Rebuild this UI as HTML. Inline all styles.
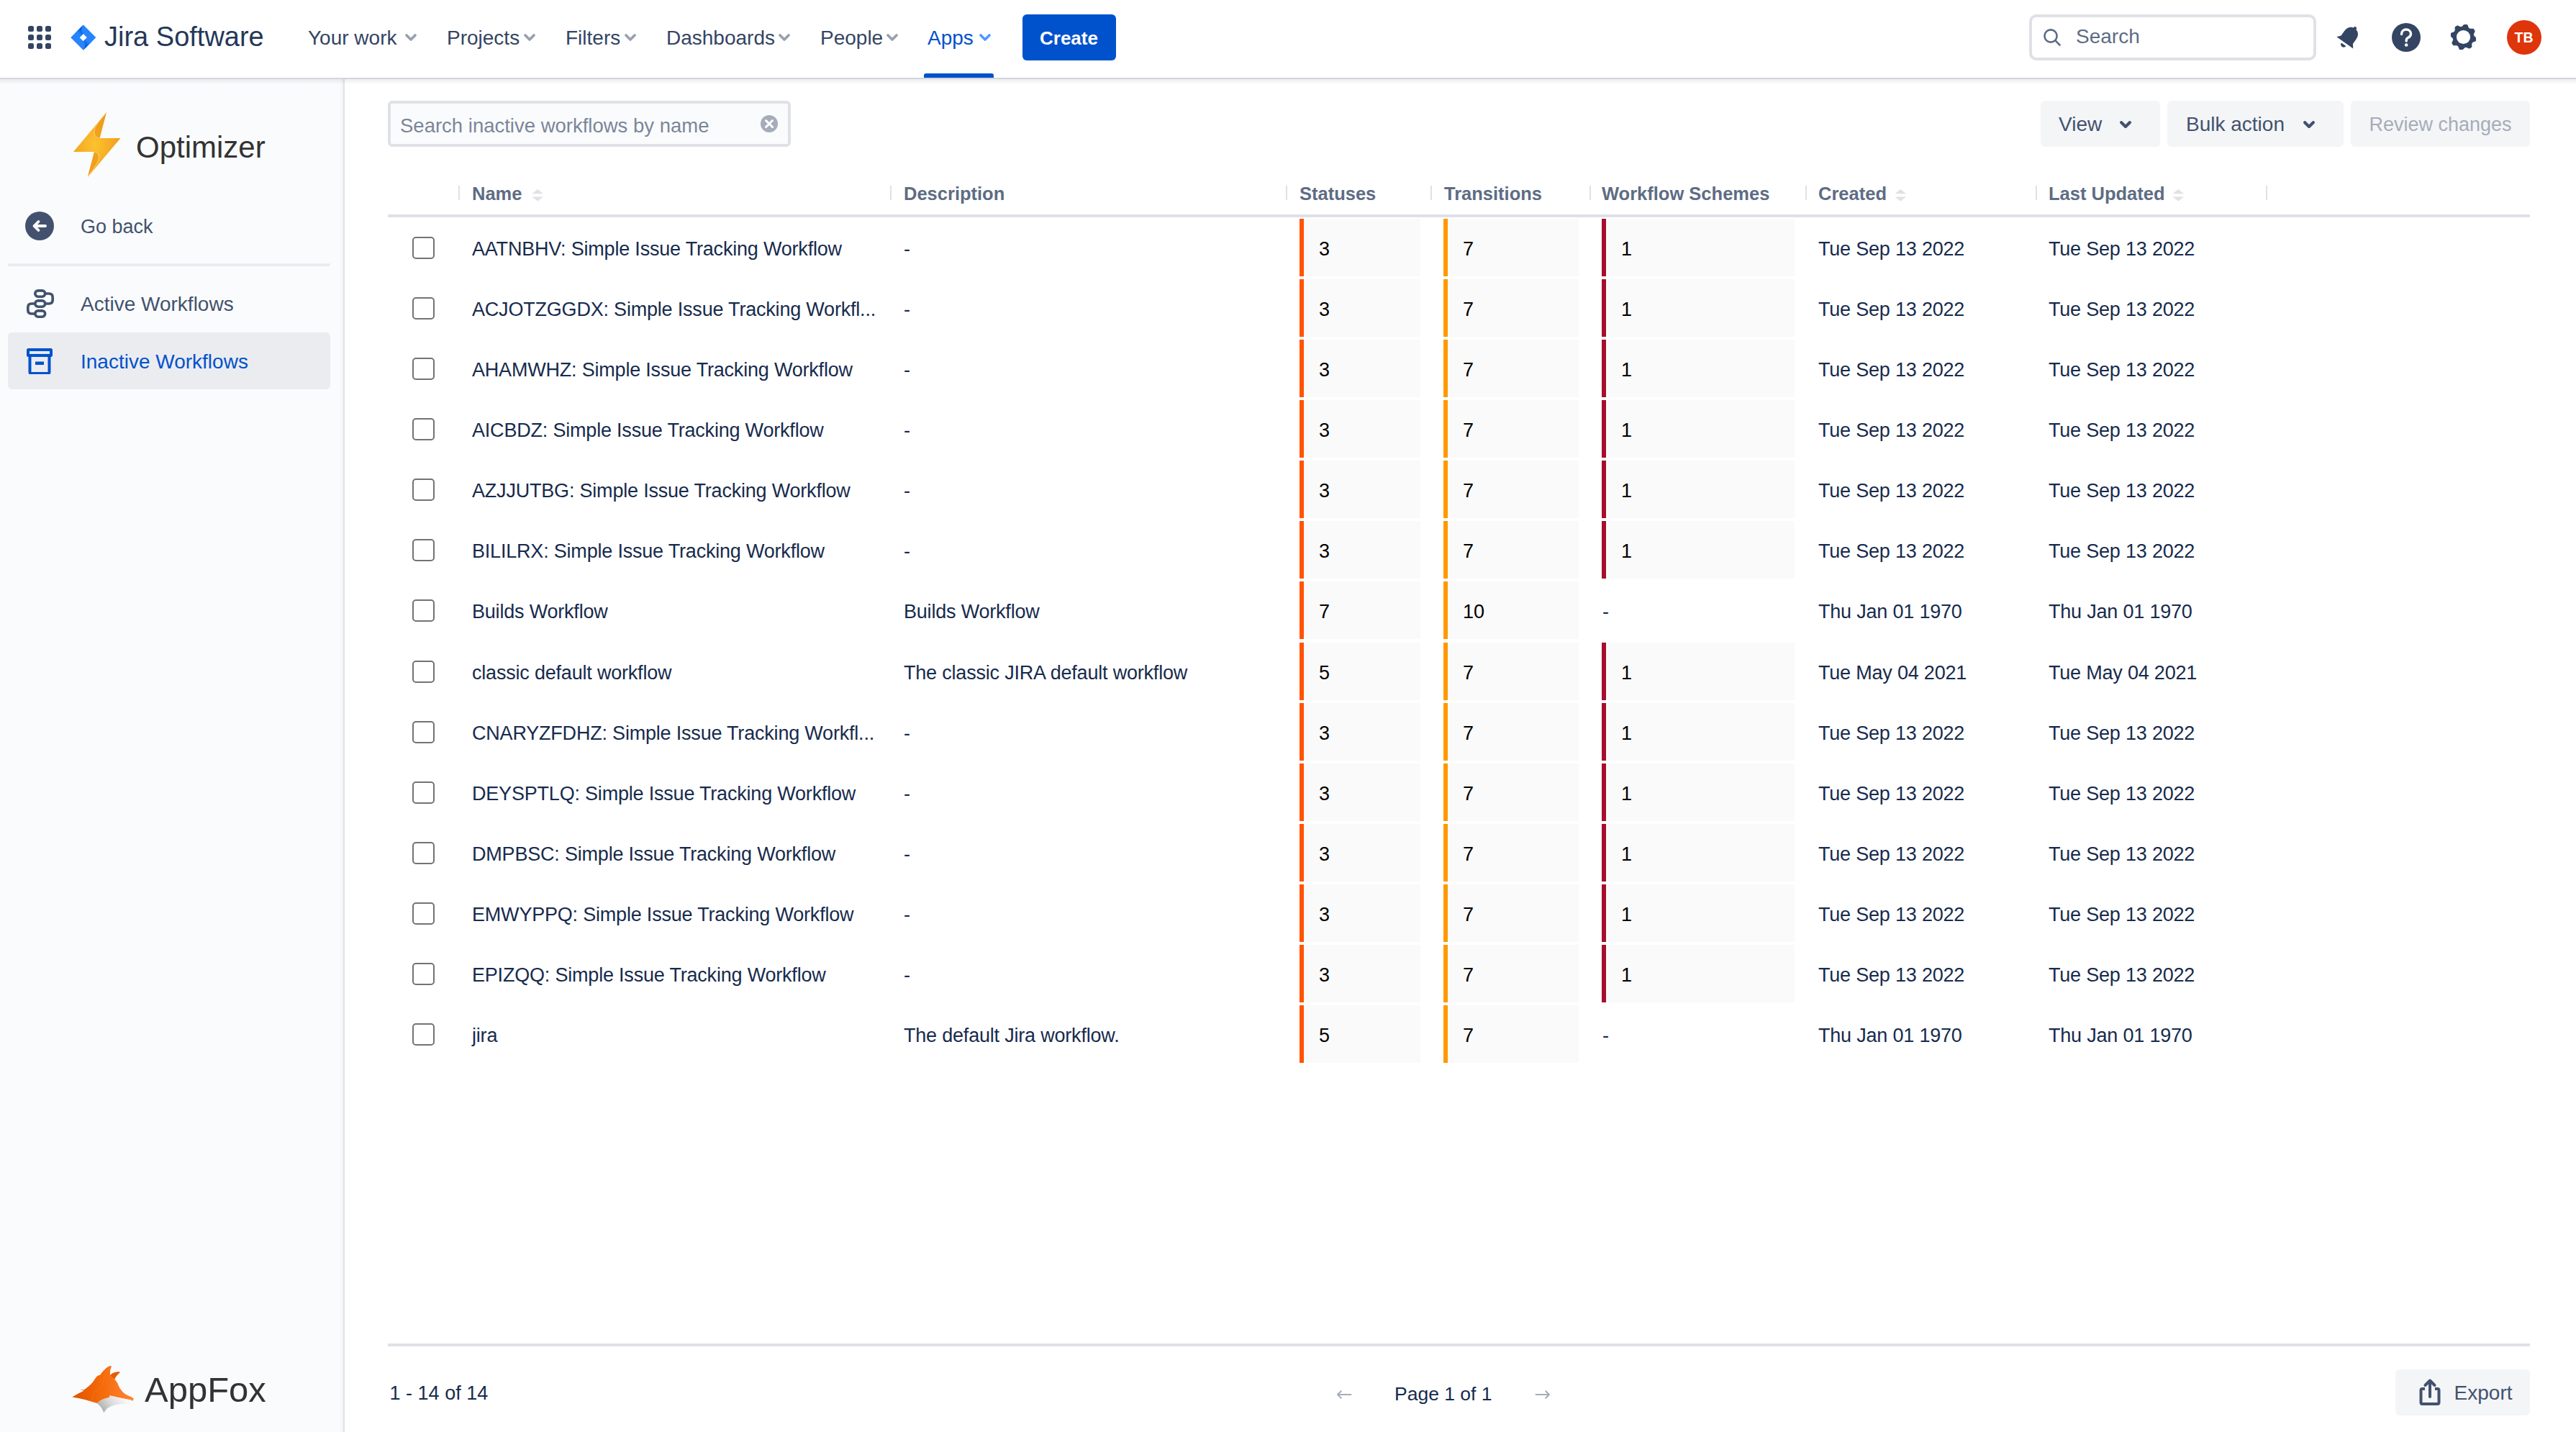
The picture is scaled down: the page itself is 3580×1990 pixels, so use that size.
<!DOCTYPE html>
<html><head><meta charset="utf-8"><title>Optimizer - Inactive Workflows</title>
<style>
html,body{margin:0;padding:0;}
body{width:3580px;height:1990px;position:relative;overflow:hidden;background:#fff;font-family:"Liberation Sans", sans-serif;}
.t{position:absolute;line-height:1;white-space:nowrap;}
.r{position:absolute;}
</style></head><body>
<div class="r" style="left:0px;top:0px;width:3580px;height:108px;background:#fff;"></div>
<div class="r" style="z-index:5;left:0;top:108px;width:3580px;height:2px;background:#d3d6dc"></div>
<div class="r" style="z-index:5;left:0;top:110px;width:3580px;height:7px;background:linear-gradient(rgba(9,30,66,0.08),rgba(9,30,66,0))"></div>
<div class="r" style="left:39px;top:36px;width:8px;height:8px;background:#344563;border-radius:2.5px"></div>
<div class="r" style="left:39px;top:48px;width:8px;height:8px;background:#344563;border-radius:2.5px"></div>
<div class="r" style="left:39px;top:60px;width:8px;height:8px;background:#344563;border-radius:2.5px"></div>
<div class="r" style="left:51px;top:36px;width:8px;height:8px;background:#344563;border-radius:2.5px"></div>
<div class="r" style="left:51px;top:48px;width:8px;height:8px;background:#344563;border-radius:2.5px"></div>
<div class="r" style="left:51px;top:60px;width:8px;height:8px;background:#344563;border-radius:2.5px"></div>
<div class="r" style="left:63px;top:36px;width:8px;height:8px;background:#344563;border-radius:2.5px"></div>
<div class="r" style="left:63px;top:48px;width:8px;height:8px;background:#344563;border-radius:2.5px"></div>
<div class="r" style="left:63px;top:60px;width:8px;height:8px;background:#344563;border-radius:2.5px"></div>
<svg class="r" style="left:94.2px;top:29.6px" width="45" height="45" viewBox="0 0 32.44 32.44">
<defs><linearGradient id="jga" gradientUnits="userSpaceOnUse" x1="15.6" y1="6.3" x2="10.5" y2="11.4"><stop offset="0.18" stop-color="#0052CC"/><stop offset="1" stop-color="#2684FF"/></linearGradient>
<linearGradient id="jgb" gradientUnits="userSpaceOnUse" x1="15.9" y1="25.7" x2="21" y2="20.6"><stop offset="0.18" stop-color="#0052CC"/><stop offset="1" stop-color="#2684FF"/></linearGradient></defs>
<path fill-rule="evenodd" d="M15.7 3.3 L28.1 15.7 Q28.4 16 28.1 16.3 L15.7 28.7 L3.3 16.3 Q3 16 3.3 15.7 Z M15.7 12.3 L19.4 16 L15.7 19.7 L12 16 Z" fill="#2684FF"/>
<path d="M15.7 12.3 A6.4 6.4 0 0 1 15.7 3.3 L7.4 11.6 L12 16 Z" fill="url(#jga)"/>
<path d="M19.4 16 L15.7 19.7 A6.4 6.4 0 0 1 15.7 28.7 L24 20.4 Z" fill="url(#jgb)"/>
</svg>
<div class="t" style="left:145px;top:31.5px;font-size:38px;color:#253858;font-weight:400;">Jira Software</div>
<div class="t" style="left:428px;top:39.1px;font-size:28px;color:#344563;font-weight:400;">Your work</div>
<svg class="r" style="left:563px;top:47px" width="16" height="10" viewBox="0 0 16 10"><path d="M2 2 L8 8 L14 2" stroke="#97A0AF" stroke-width="3.6" fill="none" stroke-linecap="round" stroke-linejoin="round"/></svg>
<div class="t" style="left:621px;top:39.1px;font-size:28px;color:#344563;font-weight:400;">Projects</div>
<svg class="r" style="left:728px;top:47px" width="16" height="10" viewBox="0 0 16 10"><path d="M2 2 L8 8 L14 2" stroke="#97A0AF" stroke-width="3.6" fill="none" stroke-linecap="round" stroke-linejoin="round"/></svg>
<div class="t" style="left:786px;top:39.1px;font-size:28px;color:#344563;font-weight:400;">Filters</div>
<svg class="r" style="left:868px;top:47px" width="16" height="10" viewBox="0 0 16 10"><path d="M2 2 L8 8 L14 2" stroke="#97A0AF" stroke-width="3.6" fill="none" stroke-linecap="round" stroke-linejoin="round"/></svg>
<div class="t" style="left:926px;top:39.1px;font-size:28px;color:#344563;font-weight:400;">Dashboards</div>
<svg class="r" style="left:1082px;top:47px" width="16" height="10" viewBox="0 0 16 10"><path d="M2 2 L8 8 L14 2" stroke="#97A0AF" stroke-width="3.6" fill="none" stroke-linecap="round" stroke-linejoin="round"/></svg>
<div class="t" style="left:1140px;top:39.1px;font-size:28px;color:#344563;font-weight:400;">People</div>
<svg class="r" style="left:1232px;top:47px" width="16" height="10" viewBox="0 0 16 10"><path d="M2 2 L8 8 L14 2" stroke="#97A0AF" stroke-width="3.6" fill="none" stroke-linecap="round" stroke-linejoin="round"/></svg>
<div class="t" style="left:1289px;top:39.1px;font-size:28px;color:#0052CC;font-weight:400;">Apps</div>
<svg class="r" style="left:1361px;top:47px" width="16" height="10" viewBox="0 0 16 10"><path d="M2 2 L8 8 L14 2" stroke="#4C9AFF" stroke-width="3.6" fill="none" stroke-linecap="round" stroke-linejoin="round"/></svg>
<div class="r" style="left:1284px;top:102px;width:97px;height:6px;background:#0052CC;border-radius:3px 3px 0 0"></div>
<div class="r" style="left:1421px;top:20px;width:130px;height:64px;background:#0052CC;border-radius:6px"></div>
<div class="t" style="left:1445px;top:40.0px;font-size:26px;color:#fff;font-weight:700;">Create</div>
<div class="r" style="left:2820px;top:20px;width:391px;height:56px;border:4px solid #DFE1E6;border-radius:10px;background:#fff"></div>
<svg class="r" style="left:2838px;top:38px" width="28" height="28" viewBox="0 0 28 28"><circle cx="12" cy="12" r="8.6" stroke="#5E6C84" stroke-width="2.6" fill="none"/><path d="M18.2 18.2 L24.5 24.5" stroke="#5E6C84" stroke-width="2.6" stroke-linecap="round"/></svg>
<div class="t" style="left:2885px;top:37.3px;font-size:28px;color:#5E6C84;font-weight:400;">Search</div>
<svg class="r" style="left:3244px;top:32px" width="40" height="40" viewBox="0 0 40 40">
<g transform="rotate(35 20 20)"><path d="M20 5 C13 5 10 10 10 16 L10 24 L6 29 L34 29 L30 24 L30 16 C30 10 27 5 20 5 Z" fill="#344563"/><circle cx="20" cy="4.5" r="2.3" fill="#344563"/><path d="M16 32 C16 34.5 18 36 20 36 C22 36 24 34.5 24 32 Z" fill="#344563"/></g></svg>
<svg class="r" style="left:3324px;top:32px" width="40" height="40" viewBox="0 0 40 40"><circle cx="20" cy="20" r="20" fill="#344563"/>
<path d="M13.5 15.5 C13.5 11.5 16.5 9 20 9 C23.5 9 26.5 11.5 26.5 15 C26.5 18 24.5 19.5 22.5 20.5 C21 21.3 20.2 22 20.2 24 L20.2 25" stroke="#fff" stroke-width="3.4" fill="none" stroke-linecap="round"/><circle cx="20.2" cy="30.5" r="2.3" fill="#fff"/></svg>
<svg class="r" style="left:3406px;top:34px" width="35" height="35" viewBox="0 0 35 35"><path d="M19.22 0.08 L22.58 0.75 L24.19 4.98 L26.51 6.52 L31.03 6.40 L32.93 9.25 L31.09 13.38 L31.63 16.11 L34.92 19.22 L34.25 22.58 L30.02 24.19 L28.48 26.51 L28.60 31.03 L25.75 32.93 L21.62 31.09 L18.89 31.63 L15.78 34.92 L12.42 34.25 L10.81 30.02 L8.49 28.48 L3.97 28.60 L2.07 25.75 L3.91 21.62 L3.37 18.89 L0.08 15.78 L0.75 12.42 L4.98 10.81 L6.52 8.49 L6.40 3.97 L9.25 2.07 L13.38 3.91 L16.11 3.37 Z" fill="#344563" stroke="#344563" stroke-width="1.5" stroke-linejoin="round"/><circle cx="17.5" cy="17.5" r="9.6" fill="#fff"/></svg>
<div class="r" style="left:3484px;top:28px;width:48px;height:48px;background:#DE350B;border-radius:50%"></div>
<div class="t" style="left:3494.5px;top:42.5px;font-size:19.5px;color:#fff;font-weight:700;">TB</div>
<div class="r" style="left:0px;top:110px;width:477px;height:1880px;background:#FAFBFC;"></div>
<div class="r" style="left:477px;top:110px;width:2px;height:1880px;background:#E3E3E4;"></div>
<div class="r" style="left:472px;top:110px;width:5px;height:1880px;background:linear-gradient(90deg,rgba(0,0,0,0),rgba(0,0,0,0.035));"></div>
<svg class="r" style="left:100px;top:154px" width="70" height="94" viewBox="100 154 70 94">
<defs><radialGradient id="bolt" cx="0.45" cy="0.5" r="0.6"><stop offset="0" stop-color="#FCC330"/><stop offset="1" stop-color="#F19A1C"/></radialGradient></defs>
<path d="M148 156 L102 211 L131 211 L122 246 L167.5 192 L138.5 192 Z" fill="url(#bolt)"/>
<path d="M147.7 156.5 C141 165 130 176 131 184 C131.5 189 134 191.5 138.5 192 Z" fill="#EE9A1A" opacity="0.75"/>
<path d="M147.7 156.5 C141 165 130 176 131 184 C131.5 189 134 191.5 138.5 192" stroke="#FFE9A8" stroke-width="0.7" fill="none" opacity="0.9"/>
<path d="M121.8 245.5 C128 237 138 225 137.5 218 C137 213.5 134.5 211.2 131 211 Z" fill="#EE9A1A" opacity="0.75"/>
<path d="M121.8 245.5 C128 237 138 225 137.5 218 C137 213.5 134.5 211.2 131 211" stroke="#FFE9A8" stroke-width="0.7" fill="none" opacity="0.9"/></svg>
<div class="t" style="left:189px;top:184.4px;font-size:42px;color:#333333;font-weight:400;">Optimizer</div>
<div class="r" style="left:35px;top:294px;width:40px;height:40px;background:#42526E;border-radius:50%"></div>
<svg class="r" style="left:35px;top:294px" width="40" height="40" viewBox="0 0 40 40"><path d="M28 20 L12.5 20 M18.5 14 L12.5 20 L18.5 26" stroke="#fff" stroke-width="3.8" fill="none" stroke-linecap="round" stroke-linejoin="round"/></svg>
<div class="t" style="left:112px;top:302.1px;font-size:27px;color:#42526E;font-weight:400;">Go back</div>
<div class="r" style="left:11px;top:366px;width:448px;height:4px;background:#EBECF0;border-radius:2px"></div>
<svg class="r" style="left:36px;top:401px" width="40" height="42" viewBox="0 0 40 42">
<g fill="none" stroke="#42526E" stroke-width="3.65">
<rect x="12.8" y="2.8" width="13.9" height="8.4" rx="4.2"/>
<rect x="12.8" y="16.8" width="13.9" height="8.4" rx="4.2"/>
<rect x="12.8" y="30.8" width="13.9" height="8.4" rx="4.2"/>
<path d="M26.7 7 L32 7 Q37.2 7 37.2 12.2 L37.2 15.8 Q37.2 21 32 21 L26.7 21"/>
<path d="M12.8 21 L7.8 21 Q2.8 21 2.8 26.2 L2.8 29.8 Q2.8 35 7.8 35 L12.8 35"/>
</g></svg>
<div class="t" style="left:112px;top:408.9px;font-size:28px;color:#42526E;font-weight:400;">Active Workflows</div>
<div class="r" style="left:11px;top:462px;width:448px;height:79px;background:#EBECF0;border-radius:6px"></div>
<svg class="r" style="left:37px;top:484px" width="36" height="36" viewBox="0 0 36 36">
<rect x="0" y="0" width="36" height="12" rx="2.5" fill="#0052CC"/>
<rect x="4.8" y="10" width="2" height="0" fill="#0052CC"/>
<path d="M4.5 9 L4.5 33 Q4.5 35 6.5 35 L29.5 35 Q31.5 35 31.5 33 L31.5 9" stroke="#0052CC" stroke-width="4" fill="none"/>
<rect x="4" y="4" width="28" height="3.9" fill="#EBECF0"/>
<rect x="12" y="18.5" width="12" height="4.5" fill="#0052CC"/>
</svg>
<div class="t" style="left:112px;top:488.9px;font-size:28px;color:#0052CC;font-weight:400;">Inactive Workflows</div>
<svg class="r" style="left:95px;top:1890px" width="100" height="80" viewBox="95 1890 100 80">
<defs><linearGradient id="fox" gradientUnits="userSpaceOnUse" x1="105" y1="1935" x2="185" y2="1935"><stop offset="0" stop-color="#E25500"/><stop offset="0.45" stop-color="#F56A0A"/><stop offset="1" stop-color="#FF8533"/></linearGradient>
<linearGradient id="foxw" gradientUnits="userSpaceOnUse" x1="140" y1="1962" x2="170" y2="1940"><stop offset="0" stop-color="#A9A9A9"/><stop offset="0.5" stop-color="#DADADA"/><stop offset="1" stop-color="#F7F7F7"/></linearGradient></defs>
<path d="M100.3 1941.4 C106 1938 112 1935 116.8 1932.5 L111.2 1931.3 C114 1931 116 1931.5 117.3 1931 C122 1928 126 1924 128.5 1921.3 C131 1918 133 1914 135.2 1912.3 C137 1911 138 1911 139.1 1910.7 C141 1908 143 1905 145.3 1903.4 C148 1900.5 151 1898.3 154.2 1898.1 L155 1899.2 C153.8 1901 153.2 1903 153.1 1905.6 L153.1 1911.2 C155 1909.5 157 1908 159.2 1907.3 C162 1906.4 164.5 1906.5 166.5 1906.8 L166 1908 C163 1910 161 1913 159.2 1916.3 C161 1918.5 162.5 1921 163.7 1923 C165 1926 166 1929 168.2 1931.3 C170 1934 172 1936 174.3 1937.5 C177 1939 179.5 1940 182.2 1941.1 L185.8 1943.6 L184.7 1946.7 L181 1945.3 C175 1944 168 1942.5 162 1941.4 C158 1940.5 155 1939.5 152 1939.4 L152.5 1942 C148 1943 144 1944 141.4 1945.3 C139 1946.8 137 1948.2 134.7 1950 C124 1946.5 112 1943 100.3 1941.4 Z" fill="url(#fox)"/>
<path d="M134.7 1950 C137 1948.2 139 1946.8 141.4 1945.3 C144 1944 148 1943 152.5 1942 L152 1939.4 C155 1939.5 158 1940.5 162 1941.4 C168 1942.5 175 1944 181 1945.3 L184 1947 C182 1949 180 1950 178.8 1950.3 C172 1950.8 165 1951.3 159.2 1952.6 C155 1954 151 1955.8 148.6 1957.6 C147 1959.5 145.5 1961.5 144.2 1963.2 C143 1960 141.5 1957 139.7 1954.8 C138 1952.8 136.5 1951.3 134.7 1950 Z" fill="url(#foxw)"/>
<path d="M153.1 1911.2 C155 1909.5 157 1908 159.2 1907.3 C162 1906.4 164.5 1906.5 166.5 1906.8 L166 1908 C163 1910 161 1913 159.2 1916.3 Z" fill="#E35D00"/>
<path d="M128 1946 C128 1940 129 1936 133 1933 C136 1931 139 1929.5 141.5 1927 C143 1924 143.5 1920 144.5 1916 C146 1911 150 1904 154 1899.5" stroke="#FFB07A" stroke-width="0.35" stroke-dasharray="0.8 0.6" fill="none" opacity="0.8"/>
</svg>
<div class="t" style="left:201px;top:1906.5px;font-size:49px;color:#333333;font-weight:400;">AppFox</div>
<div class="r" style="left:539px;top:140px;width:552px;height:56px;border:4px solid #DFE1E6;border-radius:6px;background:#FAFBFC"></div>
<div class="t" style="left:556px;top:160.7px;font-size:27.5px;color:#7A869A;font-weight:400;">Search inactive workflows by name</div>
<svg class="r" style="left:1057px;top:160px" width="24" height="24" viewBox="0 0 24 24"><circle cx="12" cy="12" r="12" fill="#A5ADBA"/><path d="M7.5 7.5 L16.5 16.5 M16.5 7.5 L7.5 16.5" stroke="#fff" stroke-width="3" stroke-linecap="round"/></svg>
<div class="r" style="left:2836px;top:140px;width:166px;height:64px;background:#F4F5F7;border-radius:6px"></div>
<div class="t" style="left:2861px;top:159.3px;font-size:28px;color:#42526E;font-weight:400;">View</div>
<svg class="r" style="left:2946px;top:168px" width="16" height="10" viewBox="0 0 16 10"><path d="M2.2 2.2 L8 8 L13.8 2.2" stroke="#42526E" stroke-width="4.2" fill="none" stroke-linecap="round" stroke-linejoin="round"/></svg>
<div class="r" style="left:3012px;top:140px;width:245px;height:64px;background:#F4F5F7;border-radius:6px"></div>
<div class="t" style="left:3038px;top:159.3px;font-size:28px;color:#42526E;font-weight:400;">Bulk action</div>
<svg class="r" style="left:3201px;top:168px" width="16" height="10" viewBox="0 0 16 10"><path d="M2.2 2.2 L8 8 L13.8 2.2" stroke="#42526E" stroke-width="4.2" fill="none" stroke-linecap="round" stroke-linejoin="round"/></svg>
<div class="r" style="left:3267px;top:140px;width:249px;height:64px;background:#F4F5F7;border-radius:6px"></div>
<div class="t" style="left:3292.5px;top:160.1px;font-size:27px;color:#A5ADBA;font-weight:400;">Review changes</div>
<div class="r" style="left:637px;top:258px;width:2px;height:20px;background:#DFE1E6;"></div>
<div class="r" style="left:1237px;top:258px;width:2px;height:20px;background:#DFE1E6;"></div>
<div class="r" style="left:1787px;top:258px;width:2px;height:20px;background:#DFE1E6;"></div>
<div class="r" style="left:1988px;top:258px;width:2px;height:20px;background:#DFE1E6;"></div>
<div class="r" style="left:2209px;top:258px;width:2px;height:20px;background:#DFE1E6;"></div>
<div class="r" style="left:2509px;top:258px;width:2px;height:20px;background:#DFE1E6;"></div>
<div class="r" style="left:2829px;top:258px;width:2px;height:20px;background:#DFE1E6;"></div>
<div class="r" style="left:3149px;top:258px;width:2px;height:20px;background:#DFE1E6;"></div>
<div class="t" style="left:656px;top:257.4px;font-size:25.5px;color:#5E6C84;font-weight:700;">Name</div>
<div class="t" style="left:1256px;top:257.4px;font-size:25.5px;color:#5E6C84;font-weight:700;">Description</div>
<div class="t" style="left:1806px;top:257.4px;font-size:25.5px;color:#5E6C84;font-weight:700;">Statuses</div>
<div class="t" style="left:2007px;top:257.4px;font-size:25.5px;color:#5E6C84;font-weight:700;">Transitions</div>
<div class="t" style="left:2226px;top:257.4px;font-size:25.5px;color:#5E6C84;font-weight:700;">Workflow Schemes</div>
<div class="t" style="left:2527px;top:257.4px;font-size:25.5px;color:#5E6C84;font-weight:700;">Created</div>
<div class="t" style="left:2847px;top:257.4px;font-size:25.5px;color:#5E6C84;font-weight:700;">Last Updated</div>
<svg class="r" style="left:739px;top:262px" width="17" height="18" viewBox="0 0 17 18"><path d="M8.3 1 L16.2 7.2 L0.4 7.2 Z M0.4 11.4 L16.2 11.4 L8.3 17.6 Z" fill="#DFE1E6"/></svg>
<svg class="r" style="left:2633px;top:262px" width="17" height="18" viewBox="0 0 17 18"><path d="M8.3 1 L16.2 7.2 L0.4 7.2 Z M0.4 11.4 L16.2 11.4 L8.3 17.6 Z" fill="#DFE1E6"/></svg>
<svg class="r" style="left:3019px;top:262px" width="17" height="18" viewBox="0 0 17 18"><path d="M8.3 1 L16.2 7.2 L0.4 7.2 Z M0.4 11.4 L16.2 11.4 L8.3 17.6 Z" fill="#DFE1E6"/></svg>
<div class="r" style="left:539px;top:298px;width:2977px;height:4px;background:#DFE1E6;"></div>
<div class="r" style="left:573px;top:329px;width:26.5px;height:26.5px;border:2.5px solid #737373;border-radius:5px;background:#fff"></div>
<div class="t" style="left:656px;top:332.5px;font-size:27px;color:#172B4D;font-weight:400;letter-spacing:-0.2px">AATNBHV: Simple Issue Tracking Workflow</div>
<div class="t" style="left:1256px;top:332.5px;font-size:27px;color:#172B4D;font-weight:400;letter-spacing:-0.2px">-</div>
<div class="r" style="left:1806px;top:304px;width:168px;height:80px;background:#FAFAFA;"></div>
<div class="r" style="left:1806px;top:304px;width:6px;height:80px;background:#FF5500;"></div>
<div class="t" style="left:1833px;top:332.5px;font-size:27px;color:#000;font-weight:400;">3</div>
<div class="r" style="left:2006px;top:304px;width:188px;height:80px;background:#FAFAFA;"></div>
<div class="r" style="left:2006px;top:304px;width:6px;height:80px;background:#FF9900;"></div>
<div class="t" style="left:2033px;top:332.5px;font-size:27px;color:#000;font-weight:400;">7</div>
<div class="r" style="left:2226px;top:304px;width:268px;height:80px;background:#FAFAFA;"></div>
<div class="r" style="left:2226px;top:304px;width:6px;height:80px;background:#A50E2E;"></div>
<div class="t" style="left:2253px;top:332.5px;font-size:27px;color:#000;font-weight:400;">1</div>
<div class="t" style="left:2527px;top:332.5px;font-size:27px;color:#172B4D;font-weight:400;letter-spacing:-0.2px">Tue Sep 13 2022</div>
<div class="t" style="left:2847px;top:332.5px;font-size:27px;color:#172B4D;font-weight:400;letter-spacing:-0.2px">Tue Sep 13 2022</div>
<div class="r" style="left:573px;top:413px;width:26.5px;height:26.5px;border:2.5px solid #737373;border-radius:5px;background:#fff"></div>
<div class="t" style="left:656px;top:416.5px;font-size:27px;color:#172B4D;font-weight:400;letter-spacing:-0.2px">ACJOTZGGDX: Simple Issue Tracking Workfl...</div>
<div class="t" style="left:1256px;top:416.5px;font-size:27px;color:#172B4D;font-weight:400;letter-spacing:-0.2px">-</div>
<div class="r" style="left:1806px;top:388px;width:168px;height:80px;background:#FAFAFA;"></div>
<div class="r" style="left:1806px;top:388px;width:6px;height:80px;background:#FF5500;"></div>
<div class="t" style="left:1833px;top:416.5px;font-size:27px;color:#000;font-weight:400;">3</div>
<div class="r" style="left:2006px;top:388px;width:188px;height:80px;background:#FAFAFA;"></div>
<div class="r" style="left:2006px;top:388px;width:6px;height:80px;background:#FF9900;"></div>
<div class="t" style="left:2033px;top:416.5px;font-size:27px;color:#000;font-weight:400;">7</div>
<div class="r" style="left:2226px;top:388px;width:268px;height:80px;background:#FAFAFA;"></div>
<div class="r" style="left:2226px;top:388px;width:6px;height:80px;background:#A50E2E;"></div>
<div class="t" style="left:2253px;top:416.5px;font-size:27px;color:#000;font-weight:400;">1</div>
<div class="t" style="left:2527px;top:416.5px;font-size:27px;color:#172B4D;font-weight:400;letter-spacing:-0.2px">Tue Sep 13 2022</div>
<div class="t" style="left:2847px;top:416.5px;font-size:27px;color:#172B4D;font-weight:400;letter-spacing:-0.2px">Tue Sep 13 2022</div>
<div class="r" style="left:573px;top:497px;width:26.5px;height:26.5px;border:2.5px solid #737373;border-radius:5px;background:#fff"></div>
<div class="t" style="left:656px;top:500.5px;font-size:27px;color:#172B4D;font-weight:400;letter-spacing:-0.2px">AHAMWHZ: Simple Issue Tracking Workflow</div>
<div class="t" style="left:1256px;top:500.5px;font-size:27px;color:#172B4D;font-weight:400;letter-spacing:-0.2px">-</div>
<div class="r" style="left:1806px;top:472px;width:168px;height:80px;background:#FAFAFA;"></div>
<div class="r" style="left:1806px;top:472px;width:6px;height:80px;background:#FF5500;"></div>
<div class="t" style="left:1833px;top:500.5px;font-size:27px;color:#000;font-weight:400;">3</div>
<div class="r" style="left:2006px;top:472px;width:188px;height:80px;background:#FAFAFA;"></div>
<div class="r" style="left:2006px;top:472px;width:6px;height:80px;background:#FF9900;"></div>
<div class="t" style="left:2033px;top:500.5px;font-size:27px;color:#000;font-weight:400;">7</div>
<div class="r" style="left:2226px;top:472px;width:268px;height:80px;background:#FAFAFA;"></div>
<div class="r" style="left:2226px;top:472px;width:6px;height:80px;background:#A50E2E;"></div>
<div class="t" style="left:2253px;top:500.5px;font-size:27px;color:#000;font-weight:400;">1</div>
<div class="t" style="left:2527px;top:500.5px;font-size:27px;color:#172B4D;font-weight:400;letter-spacing:-0.2px">Tue Sep 13 2022</div>
<div class="t" style="left:2847px;top:500.5px;font-size:27px;color:#172B4D;font-weight:400;letter-spacing:-0.2px">Tue Sep 13 2022</div>
<div class="r" style="left:573px;top:581px;width:26.5px;height:26.5px;border:2.5px solid #737373;border-radius:5px;background:#fff"></div>
<div class="t" style="left:656px;top:584.5px;font-size:27px;color:#172B4D;font-weight:400;letter-spacing:-0.2px">AICBDZ: Simple Issue Tracking Workflow</div>
<div class="t" style="left:1256px;top:584.5px;font-size:27px;color:#172B4D;font-weight:400;letter-spacing:-0.2px">-</div>
<div class="r" style="left:1806px;top:556px;width:168px;height:80px;background:#FAFAFA;"></div>
<div class="r" style="left:1806px;top:556px;width:6px;height:80px;background:#FF5500;"></div>
<div class="t" style="left:1833px;top:584.5px;font-size:27px;color:#000;font-weight:400;">3</div>
<div class="r" style="left:2006px;top:556px;width:188px;height:80px;background:#FAFAFA;"></div>
<div class="r" style="left:2006px;top:556px;width:6px;height:80px;background:#FF9900;"></div>
<div class="t" style="left:2033px;top:584.5px;font-size:27px;color:#000;font-weight:400;">7</div>
<div class="r" style="left:2226px;top:556px;width:268px;height:80px;background:#FAFAFA;"></div>
<div class="r" style="left:2226px;top:556px;width:6px;height:80px;background:#A50E2E;"></div>
<div class="t" style="left:2253px;top:584.5px;font-size:27px;color:#000;font-weight:400;">1</div>
<div class="t" style="left:2527px;top:584.5px;font-size:27px;color:#172B4D;font-weight:400;letter-spacing:-0.2px">Tue Sep 13 2022</div>
<div class="t" style="left:2847px;top:584.5px;font-size:27px;color:#172B4D;font-weight:400;letter-spacing:-0.2px">Tue Sep 13 2022</div>
<div class="r" style="left:573px;top:665px;width:26.5px;height:26.5px;border:2.5px solid #737373;border-radius:5px;background:#fff"></div>
<div class="t" style="left:656px;top:668.5px;font-size:27px;color:#172B4D;font-weight:400;letter-spacing:-0.2px">AZJJUTBG: Simple Issue Tracking Workflow</div>
<div class="t" style="left:1256px;top:668.5px;font-size:27px;color:#172B4D;font-weight:400;letter-spacing:-0.2px">-</div>
<div class="r" style="left:1806px;top:640px;width:168px;height:80px;background:#FAFAFA;"></div>
<div class="r" style="left:1806px;top:640px;width:6px;height:80px;background:#FF5500;"></div>
<div class="t" style="left:1833px;top:668.5px;font-size:27px;color:#000;font-weight:400;">3</div>
<div class="r" style="left:2006px;top:640px;width:188px;height:80px;background:#FAFAFA;"></div>
<div class="r" style="left:2006px;top:640px;width:6px;height:80px;background:#FF9900;"></div>
<div class="t" style="left:2033px;top:668.5px;font-size:27px;color:#000;font-weight:400;">7</div>
<div class="r" style="left:2226px;top:640px;width:268px;height:80px;background:#FAFAFA;"></div>
<div class="r" style="left:2226px;top:640px;width:6px;height:80px;background:#A50E2E;"></div>
<div class="t" style="left:2253px;top:668.5px;font-size:27px;color:#000;font-weight:400;">1</div>
<div class="t" style="left:2527px;top:668.5px;font-size:27px;color:#172B4D;font-weight:400;letter-spacing:-0.2px">Tue Sep 13 2022</div>
<div class="t" style="left:2847px;top:668.5px;font-size:27px;color:#172B4D;font-weight:400;letter-spacing:-0.2px">Tue Sep 13 2022</div>
<div class="r" style="left:573px;top:749px;width:26.5px;height:26.5px;border:2.5px solid #737373;border-radius:5px;background:#fff"></div>
<div class="t" style="left:656px;top:752.5px;font-size:27px;color:#172B4D;font-weight:400;letter-spacing:-0.2px">BILILRX: Simple Issue Tracking Workflow</div>
<div class="t" style="left:1256px;top:752.5px;font-size:27px;color:#172B4D;font-weight:400;letter-spacing:-0.2px">-</div>
<div class="r" style="left:1806px;top:724px;width:168px;height:80px;background:#FAFAFA;"></div>
<div class="r" style="left:1806px;top:724px;width:6px;height:80px;background:#FF5500;"></div>
<div class="t" style="left:1833px;top:752.5px;font-size:27px;color:#000;font-weight:400;">3</div>
<div class="r" style="left:2006px;top:724px;width:188px;height:80px;background:#FAFAFA;"></div>
<div class="r" style="left:2006px;top:724px;width:6px;height:80px;background:#FF9900;"></div>
<div class="t" style="left:2033px;top:752.5px;font-size:27px;color:#000;font-weight:400;">7</div>
<div class="r" style="left:2226px;top:724px;width:268px;height:80px;background:#FAFAFA;"></div>
<div class="r" style="left:2226px;top:724px;width:6px;height:80px;background:#A50E2E;"></div>
<div class="t" style="left:2253px;top:752.5px;font-size:27px;color:#000;font-weight:400;">1</div>
<div class="t" style="left:2527px;top:752.5px;font-size:27px;color:#172B4D;font-weight:400;letter-spacing:-0.2px">Tue Sep 13 2022</div>
<div class="t" style="left:2847px;top:752.5px;font-size:27px;color:#172B4D;font-weight:400;letter-spacing:-0.2px">Tue Sep 13 2022</div>
<div class="r" style="left:573px;top:833px;width:26.5px;height:26.5px;border:2.5px solid #737373;border-radius:5px;background:#fff"></div>
<div class="t" style="left:656px;top:836.5px;font-size:27px;color:#172B4D;font-weight:400;letter-spacing:-0.2px">Builds Workflow</div>
<div class="t" style="left:1256px;top:836.5px;font-size:27px;color:#172B4D;font-weight:400;letter-spacing:-0.2px">Builds Workflow</div>
<div class="r" style="left:1806px;top:808px;width:168px;height:80px;background:#FAFAFA;"></div>
<div class="r" style="left:1806px;top:808px;width:6px;height:80px;background:#FF5500;"></div>
<div class="t" style="left:1833px;top:836.5px;font-size:27px;color:#000;font-weight:400;">7</div>
<div class="r" style="left:2006px;top:808px;width:188px;height:80px;background:#FAFAFA;"></div>
<div class="r" style="left:2006px;top:808px;width:6px;height:80px;background:#FF9900;"></div>
<div class="t" style="left:2033px;top:836.5px;font-size:27px;color:#000;font-weight:400;">10</div>
<div class="t" style="left:2227px;top:836.5px;font-size:27px;color:#172B4D;font-weight:400;">-</div>
<div class="t" style="left:2527px;top:836.5px;font-size:27px;color:#172B4D;font-weight:400;letter-spacing:-0.2px">Thu Jan 01 1970</div>
<div class="t" style="left:2847px;top:836.5px;font-size:27px;color:#172B4D;font-weight:400;letter-spacing:-0.2px">Thu Jan 01 1970</div>
<div class="r" style="left:573px;top:918px;width:26.5px;height:26.5px;border:2.5px solid #737373;border-radius:5px;background:#fff"></div>
<div class="t" style="left:656px;top:921.5px;font-size:27px;color:#172B4D;font-weight:400;letter-spacing:-0.2px">classic default workflow</div>
<div class="t" style="left:1256px;top:921.5px;font-size:27px;color:#172B4D;font-weight:400;letter-spacing:-0.2px">The classic JIRA default workflow</div>
<div class="r" style="left:1806px;top:893px;width:168px;height:80px;background:#FAFAFA;"></div>
<div class="r" style="left:1806px;top:893px;width:6px;height:80px;background:#FF5500;"></div>
<div class="t" style="left:1833px;top:921.5px;font-size:27px;color:#000;font-weight:400;">5</div>
<div class="r" style="left:2006px;top:893px;width:188px;height:80px;background:#FAFAFA;"></div>
<div class="r" style="left:2006px;top:893px;width:6px;height:80px;background:#FF9900;"></div>
<div class="t" style="left:2033px;top:921.5px;font-size:27px;color:#000;font-weight:400;">7</div>
<div class="r" style="left:2226px;top:893px;width:268px;height:80px;background:#FAFAFA;"></div>
<div class="r" style="left:2226px;top:893px;width:6px;height:80px;background:#A50E2E;"></div>
<div class="t" style="left:2253px;top:921.5px;font-size:27px;color:#000;font-weight:400;">1</div>
<div class="t" style="left:2527px;top:921.5px;font-size:27px;color:#172B4D;font-weight:400;letter-spacing:-0.2px">Tue May 04 2021</div>
<div class="t" style="left:2847px;top:921.5px;font-size:27px;color:#172B4D;font-weight:400;letter-spacing:-0.2px">Tue May 04 2021</div>
<div class="r" style="left:573px;top:1002px;width:26.5px;height:26.5px;border:2.5px solid #737373;border-radius:5px;background:#fff"></div>
<div class="t" style="left:656px;top:1005.5px;font-size:27px;color:#172B4D;font-weight:400;letter-spacing:-0.2px">CNARYZFDHZ: Simple Issue Tracking Workfl...</div>
<div class="t" style="left:1256px;top:1005.5px;font-size:27px;color:#172B4D;font-weight:400;letter-spacing:-0.2px">-</div>
<div class="r" style="left:1806px;top:977px;width:168px;height:80px;background:#FAFAFA;"></div>
<div class="r" style="left:1806px;top:977px;width:6px;height:80px;background:#FF5500;"></div>
<div class="t" style="left:1833px;top:1005.5px;font-size:27px;color:#000;font-weight:400;">3</div>
<div class="r" style="left:2006px;top:977px;width:188px;height:80px;background:#FAFAFA;"></div>
<div class="r" style="left:2006px;top:977px;width:6px;height:80px;background:#FF9900;"></div>
<div class="t" style="left:2033px;top:1005.5px;font-size:27px;color:#000;font-weight:400;">7</div>
<div class="r" style="left:2226px;top:977px;width:268px;height:80px;background:#FAFAFA;"></div>
<div class="r" style="left:2226px;top:977px;width:6px;height:80px;background:#A50E2E;"></div>
<div class="t" style="left:2253px;top:1005.5px;font-size:27px;color:#000;font-weight:400;">1</div>
<div class="t" style="left:2527px;top:1005.5px;font-size:27px;color:#172B4D;font-weight:400;letter-spacing:-0.2px">Tue Sep 13 2022</div>
<div class="t" style="left:2847px;top:1005.5px;font-size:27px;color:#172B4D;font-weight:400;letter-spacing:-0.2px">Tue Sep 13 2022</div>
<div class="r" style="left:573px;top:1086px;width:26.5px;height:26.5px;border:2.5px solid #737373;border-radius:5px;background:#fff"></div>
<div class="t" style="left:656px;top:1089.5px;font-size:27px;color:#172B4D;font-weight:400;letter-spacing:-0.2px">DEYSPTLQ: Simple Issue Tracking Workflow</div>
<div class="t" style="left:1256px;top:1089.5px;font-size:27px;color:#172B4D;font-weight:400;letter-spacing:-0.2px">-</div>
<div class="r" style="left:1806px;top:1061px;width:168px;height:80px;background:#FAFAFA;"></div>
<div class="r" style="left:1806px;top:1061px;width:6px;height:80px;background:#FF5500;"></div>
<div class="t" style="left:1833px;top:1089.5px;font-size:27px;color:#000;font-weight:400;">3</div>
<div class="r" style="left:2006px;top:1061px;width:188px;height:80px;background:#FAFAFA;"></div>
<div class="r" style="left:2006px;top:1061px;width:6px;height:80px;background:#FF9900;"></div>
<div class="t" style="left:2033px;top:1089.5px;font-size:27px;color:#000;font-weight:400;">7</div>
<div class="r" style="left:2226px;top:1061px;width:268px;height:80px;background:#FAFAFA;"></div>
<div class="r" style="left:2226px;top:1061px;width:6px;height:80px;background:#A50E2E;"></div>
<div class="t" style="left:2253px;top:1089.5px;font-size:27px;color:#000;font-weight:400;">1</div>
<div class="t" style="left:2527px;top:1089.5px;font-size:27px;color:#172B4D;font-weight:400;letter-spacing:-0.2px">Tue Sep 13 2022</div>
<div class="t" style="left:2847px;top:1089.5px;font-size:27px;color:#172B4D;font-weight:400;letter-spacing:-0.2px">Tue Sep 13 2022</div>
<div class="r" style="left:573px;top:1170px;width:26.5px;height:26.5px;border:2.5px solid #737373;border-radius:5px;background:#fff"></div>
<div class="t" style="left:656px;top:1173.5px;font-size:27px;color:#172B4D;font-weight:400;letter-spacing:-0.2px">DMPBSC: Simple Issue Tracking Workflow</div>
<div class="t" style="left:1256px;top:1173.5px;font-size:27px;color:#172B4D;font-weight:400;letter-spacing:-0.2px">-</div>
<div class="r" style="left:1806px;top:1145px;width:168px;height:80px;background:#FAFAFA;"></div>
<div class="r" style="left:1806px;top:1145px;width:6px;height:80px;background:#FF5500;"></div>
<div class="t" style="left:1833px;top:1173.5px;font-size:27px;color:#000;font-weight:400;">3</div>
<div class="r" style="left:2006px;top:1145px;width:188px;height:80px;background:#FAFAFA;"></div>
<div class="r" style="left:2006px;top:1145px;width:6px;height:80px;background:#FF9900;"></div>
<div class="t" style="left:2033px;top:1173.5px;font-size:27px;color:#000;font-weight:400;">7</div>
<div class="r" style="left:2226px;top:1145px;width:268px;height:80px;background:#FAFAFA;"></div>
<div class="r" style="left:2226px;top:1145px;width:6px;height:80px;background:#A50E2E;"></div>
<div class="t" style="left:2253px;top:1173.5px;font-size:27px;color:#000;font-weight:400;">1</div>
<div class="t" style="left:2527px;top:1173.5px;font-size:27px;color:#172B4D;font-weight:400;letter-spacing:-0.2px">Tue Sep 13 2022</div>
<div class="t" style="left:2847px;top:1173.5px;font-size:27px;color:#172B4D;font-weight:400;letter-spacing:-0.2px">Tue Sep 13 2022</div>
<div class="r" style="left:573px;top:1254px;width:26.5px;height:26.5px;border:2.5px solid #737373;border-radius:5px;background:#fff"></div>
<div class="t" style="left:656px;top:1257.5px;font-size:27px;color:#172B4D;font-weight:400;letter-spacing:-0.2px">EMWYPPQ: Simple Issue Tracking Workflow</div>
<div class="t" style="left:1256px;top:1257.5px;font-size:27px;color:#172B4D;font-weight:400;letter-spacing:-0.2px">-</div>
<div class="r" style="left:1806px;top:1229px;width:168px;height:80px;background:#FAFAFA;"></div>
<div class="r" style="left:1806px;top:1229px;width:6px;height:80px;background:#FF5500;"></div>
<div class="t" style="left:1833px;top:1257.5px;font-size:27px;color:#000;font-weight:400;">3</div>
<div class="r" style="left:2006px;top:1229px;width:188px;height:80px;background:#FAFAFA;"></div>
<div class="r" style="left:2006px;top:1229px;width:6px;height:80px;background:#FF9900;"></div>
<div class="t" style="left:2033px;top:1257.5px;font-size:27px;color:#000;font-weight:400;">7</div>
<div class="r" style="left:2226px;top:1229px;width:268px;height:80px;background:#FAFAFA;"></div>
<div class="r" style="left:2226px;top:1229px;width:6px;height:80px;background:#A50E2E;"></div>
<div class="t" style="left:2253px;top:1257.5px;font-size:27px;color:#000;font-weight:400;">1</div>
<div class="t" style="left:2527px;top:1257.5px;font-size:27px;color:#172B4D;font-weight:400;letter-spacing:-0.2px">Tue Sep 13 2022</div>
<div class="t" style="left:2847px;top:1257.5px;font-size:27px;color:#172B4D;font-weight:400;letter-spacing:-0.2px">Tue Sep 13 2022</div>
<div class="r" style="left:573px;top:1338px;width:26.5px;height:26.5px;border:2.5px solid #737373;border-radius:5px;background:#fff"></div>
<div class="t" style="left:656px;top:1341.5px;font-size:27px;color:#172B4D;font-weight:400;letter-spacing:-0.2px">EPIZQQ: Simple Issue Tracking Workflow</div>
<div class="t" style="left:1256px;top:1341.5px;font-size:27px;color:#172B4D;font-weight:400;letter-spacing:-0.2px">-</div>
<div class="r" style="left:1806px;top:1313px;width:168px;height:80px;background:#FAFAFA;"></div>
<div class="r" style="left:1806px;top:1313px;width:6px;height:80px;background:#FF5500;"></div>
<div class="t" style="left:1833px;top:1341.5px;font-size:27px;color:#000;font-weight:400;">3</div>
<div class="r" style="left:2006px;top:1313px;width:188px;height:80px;background:#FAFAFA;"></div>
<div class="r" style="left:2006px;top:1313px;width:6px;height:80px;background:#FF9900;"></div>
<div class="t" style="left:2033px;top:1341.5px;font-size:27px;color:#000;font-weight:400;">7</div>
<div class="r" style="left:2226px;top:1313px;width:268px;height:80px;background:#FAFAFA;"></div>
<div class="r" style="left:2226px;top:1313px;width:6px;height:80px;background:#A50E2E;"></div>
<div class="t" style="left:2253px;top:1341.5px;font-size:27px;color:#000;font-weight:400;">1</div>
<div class="t" style="left:2527px;top:1341.5px;font-size:27px;color:#172B4D;font-weight:400;letter-spacing:-0.2px">Tue Sep 13 2022</div>
<div class="t" style="left:2847px;top:1341.5px;font-size:27px;color:#172B4D;font-weight:400;letter-spacing:-0.2px">Tue Sep 13 2022</div>
<div class="r" style="left:573px;top:1422px;width:26.5px;height:26.5px;border:2.5px solid #737373;border-radius:5px;background:#fff"></div>
<div class="t" style="left:656px;top:1425.5px;font-size:27px;color:#172B4D;font-weight:400;letter-spacing:-0.2px">jira</div>
<div class="t" style="left:1256px;top:1425.5px;font-size:27px;color:#172B4D;font-weight:400;letter-spacing:-0.2px">The default Jira workflow.</div>
<div class="r" style="left:1806px;top:1397px;width:168px;height:80px;background:#FAFAFA;"></div>
<div class="r" style="left:1806px;top:1397px;width:6px;height:80px;background:#FF5500;"></div>
<div class="t" style="left:1833px;top:1425.5px;font-size:27px;color:#000;font-weight:400;">5</div>
<div class="r" style="left:2006px;top:1397px;width:188px;height:80px;background:#FAFAFA;"></div>
<div class="r" style="left:2006px;top:1397px;width:6px;height:80px;background:#FF9900;"></div>
<div class="t" style="left:2033px;top:1425.5px;font-size:27px;color:#000;font-weight:400;">7</div>
<div class="t" style="left:2227px;top:1425.5px;font-size:27px;color:#172B4D;font-weight:400;">-</div>
<div class="t" style="left:2527px;top:1425.5px;font-size:27px;color:#172B4D;font-weight:400;letter-spacing:-0.2px">Thu Jan 01 1970</div>
<div class="t" style="left:2847px;top:1425.5px;font-size:27px;color:#172B4D;font-weight:400;letter-spacing:-0.2px">Thu Jan 01 1970</div>
<div class="r" style="left:539px;top:1867px;width:2977px;height:4px;background:#DFE1E6;"></div>
<div class="t" style="left:541.6px;top:1923.1px;font-size:27px;color:#172B4D;font-weight:400;">1 - 14 of 14</div>
<div class="t" style="left:1938px;top:1923.6px;font-size:26.5px;color:#172B4D;font-weight:400;">Page 1 of 1</div>
<svg class="r" style="left:1856px;top:1928px" width="24" height="20" viewBox="0 0 24 20"><path d="M21.5 10 L3 10 M7.8 5.2 L3 10 L7.8 14.8" stroke="#A5ADBA" stroke-width="2" fill="none" stroke-linecap="round" stroke-linejoin="round"/></svg>
<svg class="r" style="left:2132px;top:1928px" width="24" height="20" viewBox="0 0 24 20"><path d="M2.5 10 L21 10 M16.2 5.2 L21 10 L16.2 14.8" stroke="#A5ADBA" stroke-width="2" fill="none" stroke-linecap="round" stroke-linejoin="round"/></svg>
<div class="r" style="left:3329px;top:1903px;width:187px;height:64px;background:#F4F5F7;border-radius:6px"></div>
<svg class="r" style="left:3361px;top:1915px" width="32" height="40" viewBox="0 0 32 40"><path d="M9 15 L5.5 15 Q3.5 15 3.5 17 L3.5 34 Q3.5 36 5.5 36 L26.5 36 Q28.5 36 28.5 34 L28.5 17 Q28.5 15 26.5 15 L23 15" stroke="#42526E" stroke-width="4" fill="none" stroke-linejoin="round"/><path d="M16 26 L16 4 M9.5 10 L16 3.5 L22.5 10" stroke="#42526E" stroke-width="4" fill="none" stroke-linecap="round" stroke-linejoin="round"/></svg>
<div class="t" style="left:3410.6px;top:1922.3px;font-size:28px;color:#42526E;font-weight:400;">Export</div>
</body></html>
